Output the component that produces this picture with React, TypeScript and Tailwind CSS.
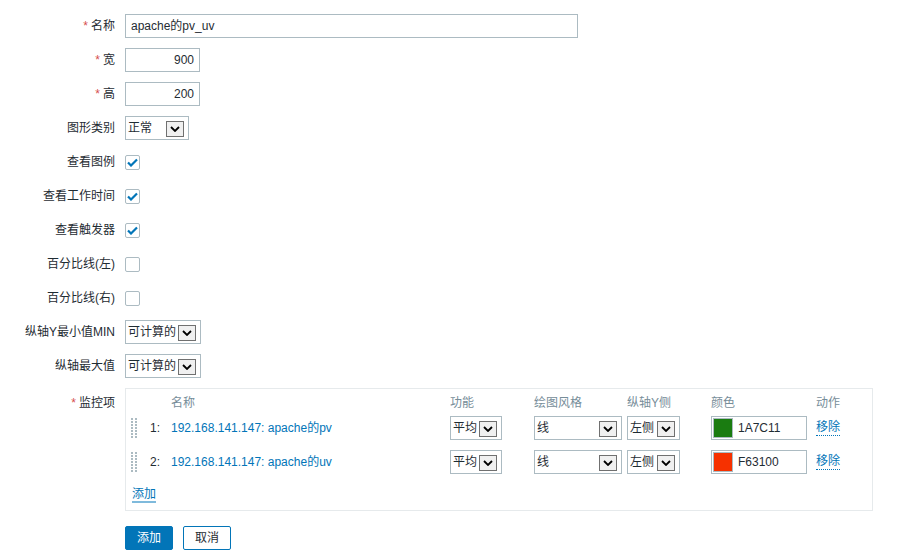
import React from 'react';

const font = { fontFamily: '"Liberation Sans", Arial, "Noto Sans CJK SC", sans-serif' };

function Arrow() {
  return (
    <span className="absolute right-[4px] top-[4px] flex h-[16px] w-[18px] items-center justify-center border border-[#707070] bg-[#f0f0f0]">
      <svg width="10" height="6" viewBox="0 0 10 6">
        <path d="M1 1l4 4 4-4" fill="none" stroke="#000" strokeWidth="1.8" />
      </svg>
    </span>
  );
}

function Select({ value, w }: { value: string; w: string }) {
  return (
    <div className={`relative h-[24px] ${w} border border-[#acbbc2] bg-white pl-[2px] text-[12px] leading-[22px] text-[#1f2c33]`}>
      {value}
      <Arrow />
    </div>
  );
}

function Check({ on }: { on: boolean }) {
  return (
    <div className="flex h-[15px] w-[15px] items-center justify-center rounded-[2px] border border-[#acbbc2] bg-white">
      {on && (
        <svg width="11" height="9" viewBox="0 0 11 9">
          <path d="M1 4.5l3 3 6-6" fill="none" stroke="#0275b8" strokeWidth="2.2" />
        </svg>
      )}
    </div>
  );
}

function Row({ label, req, children }: { label: string; req?: boolean; children: React.ReactNode }) {
  return (
    <div className="flex h-[24px] items-center">
      <div className="w-[115px] shrink-0 text-right text-[12px] text-[#1f2c33]">
        {req && <span className="mr-[3px] text-[#d64e4e]">*</span>}
        {label}
      </div>
      <div className="ml-[10px] flex items-center">{children}</div>
    </div>
  );
}

function Handle() {
  const dots = [];
  for (let r = 0; r < 7; r++) {
    for (let c = 0; c < 2; c++) {
      dots.push(<rect key={`${r}-${c}`} x={c * 4} y={r * 3} width="2" height="2" fill="#acbbc2" />);
    }
  }
  return (
    <svg width="6" height="21" viewBox="0 0 6 21">
      {dots}
    </svg>
  );
}

const items = [
  { n: 1, name: '192.168.141.147: apache的pv', color: '1A7C11', hex: '#1a7c11' },
  { n: 2, name: '192.168.141.147: apache的uv', color: 'F63100', hex: '#f63100' },
];

export default function App() {
  return (
    <div className="min-h-[552px] w-[908px] bg-white pt-[14px]" style={font}>
      <div className="flex flex-col gap-[10px]">
        <Row label="名称" req>
          <div className="h-[24px] w-[453px] border border-[#acbbc2] px-[5px] text-[12px] leading-[22px] text-[#1f2c33]">apache的pv_uv</div>
        </Row>
        <Row label="宽" req>
          <div className="h-[24px] w-[75px] border border-[#acbbc2] px-[5px] text-right text-[12px] leading-[22px] text-[#1f2c33]">900</div>
        </Row>
        <Row label="高" req>
          <div className="h-[24px] w-[75px] border border-[#acbbc2] px-[5px] text-right text-[12px] leading-[22px] text-[#1f2c33]">200</div>
        </Row>
        <Row label="图形类别">
          <Select value="正常" w="w-[64px]" />
        </Row>
        <Row label="查看图例">
          <Check on />
        </Row>
        <Row label="查看工作时间">
          <Check on />
        </Row>
        <Row label="查看触发器">
          <Check on />
        </Row>
        <Row label="百分比线(左)">
          <Check on={false} />
        </Row>
        <Row label="百分比线(右)">
          <Check on={false} />
        </Row>
        <Row label="纵轴Y最小值MIN">
          <Select value="可计算的" w="w-[76px]" />
        </Row>
        <Row label="纵轴最大值">
          <Select value="可计算的" w="w-[76px]" />
        </Row>
        <div className="flex">
          <div className="w-[115px] shrink-0 pt-[6px] text-right text-[12px] text-[#1f2c33]">
            <span className="mr-[3px] text-[#d64e4e]">*</span>监控项
          </div>
          <div className="ml-[10px] h-[123px] w-[748px] border border-[#e6eaec] px-[4px] pt-[5px]">
            <div className="flex h-[18px] items-center text-[12px] text-[#768d99]">
              <div className="w-[41px]" />
              <div className="w-[279px]">名称</div>
              <div className="w-[84px]">功能</div>
              <div className="w-[93px]">绘图风格</div>
              <div className="w-[84px]">纵轴Y侧</div>
              <div className="w-[105px]">颜色</div>
              <div>动作</div>
            </div>
            <div className="mt-[4px] flex flex-col gap-[10px]">
              {items.map((it) => (
                <div key={it.n} className="flex h-[24px] items-center text-[12px]">
                  <div className="flex w-[20px] items-center pl-[1px]">
                    <Handle />
                  </div>
                  <div className="w-[21px] text-[#1f2c33]">{it.n}:</div>
                  <div className="w-[279px] text-[#0275b8]">{it.name}</div>
                  <div className="w-[84px]">
                    <Select value="平均" w="w-[52px]" />
                  </div>
                  <div className="w-[93px]">
                    <Select value="线" w="w-[88px]" />
                  </div>
                  <div className="w-[84px]">
                    <Select value="左侧" w="w-[53px]" />
                  </div>
                  <div className="w-[105px]">
                    <div className="flex h-[24px] w-[96px] items-center border border-[#acbbc2] bg-white pl-[1px]">
                      <div className="h-[20px] w-[20px] border border-[#acbbc2]" style={{ backgroundColor: it.hex }} />
                      <span className="ml-[5px] text-[#1f2c33]">{it.color}</span>
                    </div>
                  </div>
                  <div className="border-b border-dotted border-[#0275b8] leading-[15px] text-[#0275b8]">移除</div>
                </div>
              ))}
            </div>
            <div className="mt-[13px] flex">
              <span className="ml-[2px] border-b-2 border-[#7fbadc] leading-[14px] text-[12px] text-[#0275b8]">添加</span>
            </div>
          </div>
        </div>
      </div>
      <div className="ml-[125px] mt-[15px] flex gap-[10px]">
        <button className="h-[24px] w-[48px] rounded-[2px] border border-[#0275b8] bg-[#0275b8] text-[12px] text-white">添加</button>
        <button className="h-[24px] w-[48px] rounded-[2px] border border-[#0275b8] bg-white text-[12px] text-[#1f2c33]">取消</button>
      </div>
    </div>
  );
}
